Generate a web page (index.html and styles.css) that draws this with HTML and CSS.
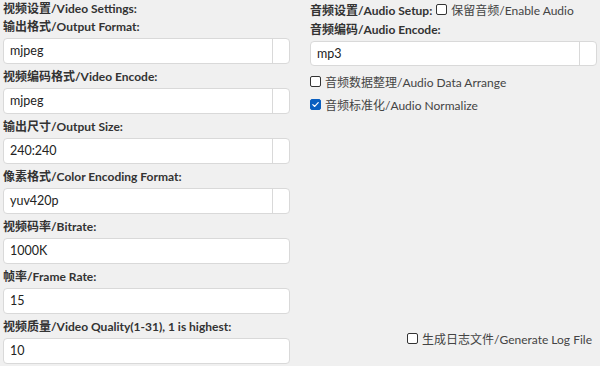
FILE: index.html
```html
<!DOCTYPE html>
<html lang="en">
<head>
    <meta charset="UTF-8">
    <title>Settings</title>
    <link rel="stylesheet" href="styles.css">
</head>
<body>
    <div class="panel">
        <div class="column video">
            <div class="title">视频设置/Video Settings:</div>

            <div class="field">
                <label>输出格式/Output Format:</label>
                <div class="combo"><span class="value">mjpeg</span><span class="drop"></span></div>
            </div>
            <div class="field">
                <label>视频编码格式/Video Encode:</label>
                <div class="combo"><span class="value">mjpeg</span><span class="drop"></span></div>
            </div>
            <div class="field">
                <label>输出尺寸/Output Size:</label>
                <div class="combo"><span class="value">240:240</span><span class="drop"></span></div>
            </div>
            <div class="field">
                <label>像素格式/Color Encoding Format:</label>
                <div class="combo"><span class="value">yuv420p</span><span class="drop"></span></div>
            </div>
            <div class="field">
                <label>视频码率/Bitrate:</label>
                <div class="combo"><span class="value">1000K</span></div>
            </div>
            <div class="field">
                <label>帧率/Frame Rate:</label>
                <div class="combo"><span class="value">15</span></div>
            </div>
            <div class="field">
                <label>视频质量/Video Quality(1-31), 1 is highest:</label>
                <div class="combo"><span class="value">10</span></div>
            </div>
        </div>

        <div class="column audio">
            <div class="title-row">
                <span class="title">音频设置/Audio Setup:</span>
                <span class="check"><span class="box"></span>保留音频/Enable Audio</span>
            </div>
            <div class="field">
                <label>音频编码/Audio Encode:</label>
                <div class="combo"><span class="value">mp3</span><span class="drop"></span></div>
            </div>
            <div class="check row"><span class="box"></span>音频数据整理/Audio Data Arrange</div>
            <div class="check row"><span class="box checked"><svg viewBox="0 0 10 10" width="9" height="9"><path d="M2 5.2 L4.1 7.2 L8 2.8" fill="none" stroke="#fff" stroke-width="1.3" stroke-linecap="round" stroke-linejoin="round"/></svg></span>音频标准化/Audio Normalize</div>

            <div class="check log"><span class="box"></span>生成日志文件/Generate Log File</div>
        </div>
    </div>
</body>
</html>
```

FILE: styles.css
```css
body {
    margin: 0;
    background-color: #f0f0f0;
    color: #333;
    font-family: Lato, "Noto Sans CJK SC", sans-serif;
    font-size: 12px;
}

.panel {
    display: flex;
    height: 366px;
    padding: 0 3px;
    box-sizing: border-box;
}

.column {
    display: flex;
    flex-direction: column;
}

.video {
    width: 287px;
}

.audio {
    width: 287px;
    margin-left: 20px;
}

.title,
.field label {
    font-weight: bold;
    color: #333;
}

.video .title {
    height: 14px;
    line-height: 17px;
}

.field {
    display: flex;
    flex-direction: column;
}

.field label {
    height: 24px;
    line-height: 25px;
}

.combo {
    display: flex;
    height: 26px;
    background: #fff;
    border: 1px solid #d9d9d9;
    border-radius: 4px;
    box-sizing: border-box;
    color: #222;
    font-size: 12.5px;
}

.combo .value {
    flex: 1;
    line-height: 24px;
    padding-left: 6px;
}

.combo .drop {
    width: 16px;
    border-left: 1px solid #d9d9d9;
}

.title-row {
    display: flex;
    align-items: center;
    height: 18px;
}

.title-row .check {
    margin-left: 4px;
}

.audio .field label {
    height: 23px;
    line-height: 24px;
}

.audio .combo {
    height: 25px;
}

.check {
    display: flex;
    align-items: center;
    color: #444;
}

.check.row {
    height: 23px;
}

.audio .field + .check.row {
    margin-top: 4px;
}

.box {
    display: inline-flex;
    align-items: center;
    justify-content: center;
    width: 9px;
    height: 9px;
    border: 1px solid #333;
    border-radius: 2px;
    margin-right: 4px;
    background: #fff;
}

.box.checked {
    background: #0a5fc0;
    border-color: #0a5fc0;
}

.log {
    margin-top: auto;
    margin-bottom: 19px;
    align-self: flex-end;
    margin-right: 5px;
}
```
